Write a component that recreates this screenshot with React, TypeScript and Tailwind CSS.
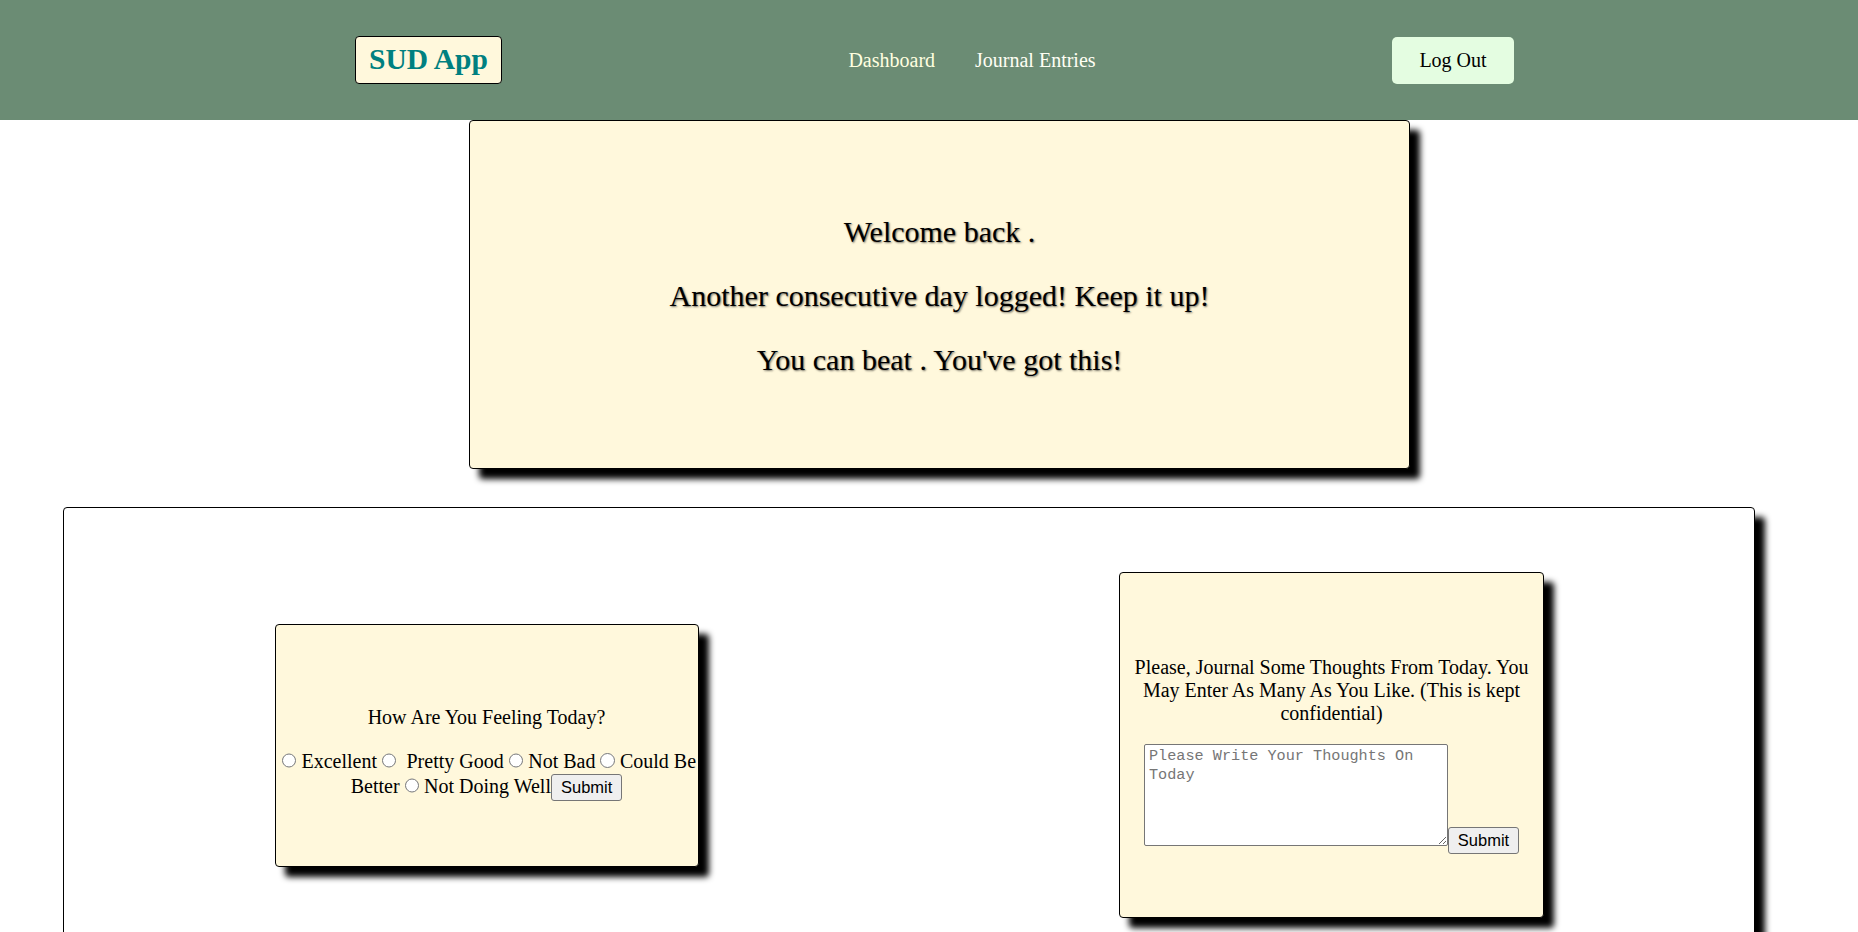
import React from "react";

function Radio() {
  return (
    <input
      type="radio"
      name="feeling"
      className="w-[14.5px] h-[14.5px] m-0 ml-[5px] align-baseline"
    />
  );
}

export default function App() {
  return (
    <div className="min-h-screen bg-white text-black text-[20px] font-['Liberation_Serif','Times_New_Roman',serif]">
      <header className="h-[120px] bg-[#6b8c74] flex items-center">
        <div className="ml-[355px] w-[1159px] flex items-center justify-between">
          <div className="w-[147px] h-[48px] border border-black rounded-[4px] bg-[#fff8dc] flex items-center justify-center text-[29.5px] font-bold text-[#008080] leading-none">
            SUD App
          </div>
          <nav className="pl-[50px] flex gap-[40px] leading-[23px]">
            <a className="text-[#ffffe0]">Dashboard</a>
            <a className="text-[#fffff4]">Journal Entries</a>
          </nav>
          <button className="w-[122px] h-[47px] rounded-[5px] bg-[#e4fde1] text-black text-[20px] font-['Liberation_Serif',serif]">
            Log Out
          </button>
        </div>
      </header>

      <section className="ml-[469px] w-[941px] h-[349px] border border-black rounded-[4px] bg-[#fff8dc] shadow-[10px_10px_6px_#000] flex flex-col items-center justify-center gap-[30px] text-[30px] leading-[34px] [text-shadow:1px_1px_2px_rgba(0,0,0,0.55)]">
        <h2 className="pt-[3px]">Welcome back .</h2>
        <h2>Another consecutive day logged! Keep it up!</h2>
        <h2>You can beat . You've got this!</h2>
      </section>

      <main className="ml-[63px] mt-[38px] w-[1692px] border border-black rounded-[4px] shadow-[10px_10px_6px_#000] flex pt-[64px] pb-[64px]">
        <div className="flex-1 flex items-center justify-center">
          <div className="w-[424px] h-[243px] border border-black rounded-[4px] bg-[#fff8dc] shadow-[10px_10px_6px_#000] pt-[81px] text-center">
            <p className="leading-[23px]">How Are You Feeling Today?</p>
            <div className="mt-[20px] leading-[25px]">
              <div className="whitespace-nowrap">
                <Radio /> Excellent
                <Radio />{"\u00a0 "}Pretty Good
                <Radio /> Not Bad
                <Radio /> Could Be
              </div>
              <div className="whitespace-nowrap">
                Better
                <Radio /> Not Doing Well
                <button className="h-[27px] px-[9px] bg-[#efefef] border border-[#767676] rounded-[3px] text-[16.5px] leading-none font-['Liberation_Sans',Arial,sans-serif] align-baseline">
                  Submit
                </button>
              </div>
            </div>
          </div>
        </div>
        <div className="flex-1 flex items-center justify-center">
          <div className="w-[425px] h-[346px] border border-black rounded-[4px] bg-[#fff8dc] shadow-[10px_10px_6px_#000] pt-[83px] px-[12px] text-center">
            <p className="leading-[23px]">
              Please, Journal Some Thoughts From Today. You May Enter As Many As
              You Like. (This is kept confidential)
            </p>
            <div className="mt-[19px] flex justify-center items-end">
              <textarea
                placeholder="Please Write Your Thoughts On Today"
                className="w-[304px] h-[102px] border border-[#767676] rounded-[2px] bg-white px-[4px] py-[2px] text-[15.2px] leading-[19.3px] font-['Liberation_Mono','DejaVu_Sans_Mono',monospace] placeholder:text-[#767676] resize-y"
              />
              <button className="h-[27px] w-[71px] -mb-[8px] bg-[#efefef] border border-[#767676] rounded-[3px] text-[16.5px] leading-none font-['Liberation_Sans',Arial,sans-serif]">
                Submit
              </button>
            </div>
          </div>
        </div>
      </main>
    </div>
  );
}
